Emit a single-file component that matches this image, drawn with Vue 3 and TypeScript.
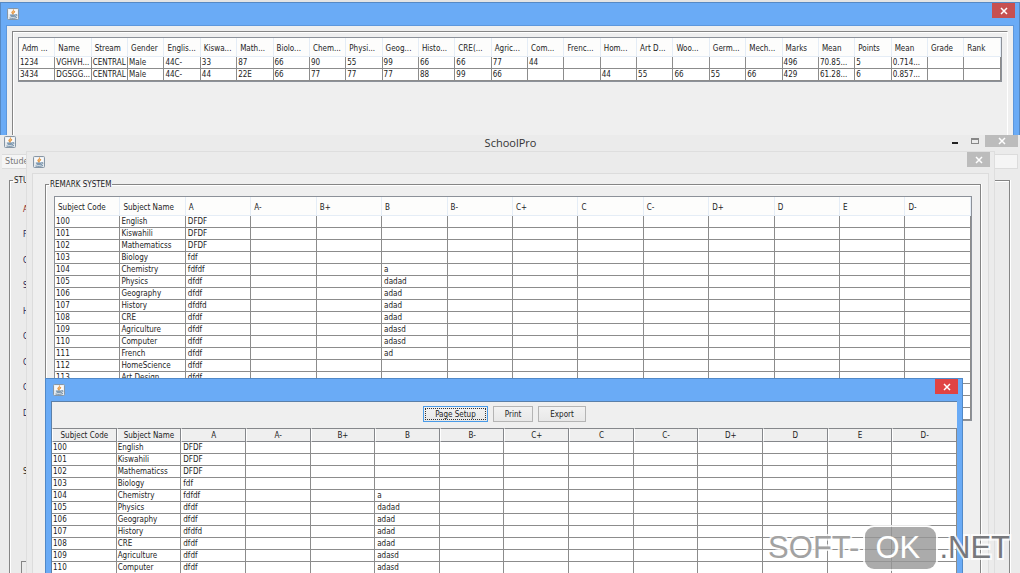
<script setup lang="ts">
import { defineComponent, h } from 'vue'

const JavaIcon = defineComponent({
  render() {
    return h('svg', { viewBox: '0 0 24 24', width: 12, height: 12, 'aria-hidden': 'true' }, [
      h('rect', { x: 1, y: 1, width: 22, height: 22, rx: 2, fill: '#e4e9ed', stroke: '#8796a5', 'stroke-width': 2 }),
      h('path', { d: 'M3 3h18v9H3z', fill: '#f8f9fa' }),
      h('path', { d: 'M13 3c1 3-5 4-3 7l2 3c0-3 5-4 3-7', fill: '#f0b36b', stroke: '#e5953f', 'stroke-width': 2 }),
      h('path', { d: 'M6 13h11v1c0 3-2 4-3 4H9c-2 0-3-2-3-5z', fill: '#7f9ab2' }),
      h('path', { d: 'M17 13c4-1 4 3-1 4M5 20c5 1 10 1 15-1', fill: 'none', stroke: '#6c8aa5', 'stroke-width': 2 }),
    ])
  },
})

const marksColumns: string[] = [
  'Adm ...', 'Name', 'Stream', 'Gender', 'Englis...', 'Kiswa...', 'Math...', 'Biolo...', 'Chem...',
  'Physi...', 'Geog...', 'Histo...', 'CRE(...', 'Agric...', 'Com...', 'Frenc...', 'Hom...', 'Art D...',
  'Woo...', 'Germ...', 'Mech...', 'Marks', 'Mean', 'Points', 'Mean', 'Grade', 'Rank',
]
const marksRows: string[][] = [
  ['1234', 'VGHVH...', 'CENTRAL', 'Male', '44C-', '33', '87', '66', '90', '55', '99', '66', '66', '77', '44',
    '', '', '', '', '', '', '496', '70.85...', '5', '0.714...', '', ''],
  ['3434', 'DGSGG...', 'CENTRAL', 'Male', '44C-', '44', '22E', '66', '77', '77', '77', '88', '99', '66', '',
    '', '44', '55', '66', '55', '66', '429', '61.28...', '6', '0.857...', '', ''],
]

const gradeColumns: string[] = [
  'Subject Code', 'Subject Name', 'A', 'A-', 'B+', 'B', 'B-', 'C+', 'C', 'C-', 'D+', 'D', 'E', 'D-',
]

interface Remark { code: string; name: string; a: string; b: string }
const remarks: Remark[] = [
  { code: '100', name: 'English', a: 'DFDF', b: '' },
  { code: '101', name: 'Kiswahili', a: 'DFDF', b: '' },
  { code: '102', name: 'Mathematicss', a: 'DFDF', b: '' },
  { code: '103', name: 'Biology', a: 'fdf', b: '' },
  { code: '104', name: 'Chemistry', a: 'fdfdf', b: 'a' },
  { code: '105', name: 'Physics', a: 'dfdf', b: 'dadad' },
  { code: '106', name: 'Geography', a: 'dfdf', b: 'adad' },
  { code: '107', name: 'History', a: 'dfdfd', b: 'adad' },
  { code: '108', name: 'CRE', a: 'dfdf', b: 'adad' },
  { code: '109', name: 'Agriculture', a: 'dfdf', b: 'adasd' },
  { code: '110', name: 'Computer', a: 'dfdf', b: 'adasd' },
  { code: '111', name: 'French', a: 'dfdf', b: 'ad' },
  { code: '112', name: 'HomeScience', a: 'dfdf', b: '' },
  { code: '113', name: 'Art Design', a: 'dfdf', b: '' },
]
const cells = (r: Remark): string[] => [r.code, r.name, r.a, '', '', r.b, '', '', '', '', '', '', '', '']
const blank: string[] = gradeColumns.map(() => '')
const remarkRows: string[][] = [...remarks.map(cells), blank, blank, blank]
const previewRows: string[][] = remarks.slice(0, 11).map(cells)

const formLabels: string[] = ['A', 'F', 'C', 'S', 'H', 'C', 'C', 'C', 'D']
</script>

<template>
  <main class="desktop">
    <section class="win marks" aria-label="Marks">
      <header class="bar blue">
        <JavaIcon />
        <button class="close red" aria-label="Close"><svg viewBox="0 0 8 8" width="8" height="8"><path d="M1 1l6 6M7 1l-6 6" /></svg></button>
      </header>
      <div class="marks-client">
        <div class="etched">
          <table class="grid soft">
            <thead><tr><th v-for="(c, i) in marksColumns" :key="i">{{ c }}</th></tr></thead>
            <tbody>
              <tr v-for="r in marksRows" :key="r[0]"><td v-for="(v, i) in r" :key="i">{{ v }}</td></tr>
            </tbody>
          </table>
        </div>
      </div>
    </section>

    <section class="win school" aria-label="SchoolPro">
      <header class="bar school-bar">
        <JavaIcon />
        <h1>SchoolPro</h1>
        <div class="controls">
          <button class="min" aria-label="Minimize"><i></i></button>
          <button class="max" aria-label="Maximize"><i></i></button>
          <button class="close gray wide" aria-label="Close"><svg viewBox="0 0 8 8" width="8" height="8"><path d="M1 1l6 6M7 1l-6 6" /></svg></button>
        </div>
      </header>
      <nav class="menu"><button>Stude</button></nav>
      <fieldset class="form">
        <legend>STU</legend>
        <ul>
          <li v-for="(l, i) in formLabels" :key="i">{{ l }}</li>
        </ul>
        <p>S</p>
        <div class="subpanel"></div>
      </fieldset>
    </section>

    <section class="win remark" aria-label="Remark system">
      <header class="bar remark-bar">
        <JavaIcon />
        <button class="close gray" aria-label="Close"><svg viewBox="0 0 8 8" width="8" height="8"><path d="M1 1l6 6M7 1l-6 6" /></svg></button>
      </header>
      <div class="remark-client">
        <fieldset class="remark-set">
          <legend>REMARK SYSTEM</legend>
          <div class="remark-body">
            <table class="grid soft">
              <thead><tr><th v-for="c in gradeColumns" :key="c">{{ c }}</th></tr></thead>
              <tbody>
                <tr v-for="(r, n) in remarkRows" :key="n"><td v-for="(v, i) in r" :key="i">{{ v }}</td></tr>
              </tbody>
            </table>
          </div>
        </fieldset>
      </div>
    </section>

    <section class="win preview" aria-label="Print preview">
      <header class="bar blue">
        <JavaIcon />
        <button class="close red bright" aria-label="Close"><svg viewBox="0 0 8 8" width="8" height="8"><path d="M1 1l6 6M7 1l-6 6" /></svg></button>
      </header>
      <div class="preview-client">
        <div class="tools">
          <button class="tool focused">Page Setup</button>
          <button class="tool">Print</button>
          <button class="tool">Export</button>
        </div>
        <table class="grid raised">
          <thead><tr><th v-for="c in gradeColumns" :key="c">{{ c }}</th></tr></thead>
          <tbody>
            <tr v-for="r in previewRows" :key="r[0]"><td v-for="(v, i) in r" :key="i">{{ v }}</td></tr>
          </tbody>
        </table>
      </div>
    </section>

    <aside class="mark"><span class="soft-word">SOFT-</span><span class="ok">OK</span><span class="net">.NET</span></aside>
  </main>
</template>

<style>
html,
body {
  height: 100%;
  overflow: hidden;
}
</style>

<style scoped>
.desktop {
  position: relative;
  height: 100vh;
  overflow: hidden;
  background: #e4e4e4;
  color: #1c1c1c;
  font: 8px/11px "DejaVu Sans Condensed", "Noto Sans", sans-serif;
}
.desktop * {
  box-sizing: border-box;
}
button {
  margin: 0;
  padding: 0;
  border: 0;
  background: none;
  color: inherit;
  font: inherit;
}
.win {
  position: absolute;
  display: flex;
  flex-direction: column;
}
.bar {
  display: flex;
  flex: none;
  align-items: flex-start;
  justify-content: space-between;
}
.close {
  display: flex;
  align-items: center;
  justify-content: center;
  width: 23px;
  height: 15px;
}
.close path {
  stroke: #fff;
  stroke-width: 1.5;
}
.red {
  background: #c75050;
}
.red.bright {
  background: #e04343;
}
.gray {
  background: #bcbcbc;
}
.wide {
  width: 33px;
  height: 12px;
}

.marks {
  top: 2px;
  left: 0;
  right: 0;
  height: 150px;
  padding: 0 5px;
  border: 1px solid #5689c4;
  background: #6aabf6;
}
.blue {
  height: 22px;
}
.marks .bar {
  padding: 0 0 0 1px;
  margin-right: -1px;
}
.blue > svg {
  margin-top: 5px;
}
.marks-client {
  flex: 1;
  padding: 5px;
  border: 1px solid #5d97dc;
  border-width: 1px 1px 0;
  background: #efefef;
}
.etched {
  height: 100%;
  padding: 5px;
  border: 1px solid #858585;
  border-right-color: #fff;
  box-shadow: inset 1px 1px #fff;
}

.grid {
  width: 100%;
  table-layout: fixed;
  border-collapse: separate;
  border-spacing: 0;
  background: #fff;
}
.grid th,
.grid td {
  overflow: hidden;
  padding: 0 0 0 1px;
  text-align: left;
  white-space: nowrap;
  font-weight: normal;
}
.grid td {
  height: 12px;
  border-right: 1px solid #8c8c8c;
  border-bottom: 1px solid #8c8c8c;
}
.soft {
  border: 1px solid #8c9199;
}
.soft th {
  height: 19px;
  padding-top: 2px;
  padding-left: 3px;
  border-right: 1px solid #e5edf6;
  border-bottom: 1px solid #e5edf6;
  background: #fdfdfc;
}
.remark td:nth-child(n + 3),
.raised td:nth-child(n + 3) {
  padding-left: 2px;
}

.school {
  top: 135px;
  right: 0;
  bottom: 0;
  left: 0;
  padding: 0 2px;
  background: #ebebeb;
}
.school-bar {
  height: 19px;
  padding-left: 2px;
}
.school-bar > svg {
  margin-top: 1px;
}
h1 {
  flex: 1;
  margin: 0;
  padding-left: 60px;
  color: #333;
  font: 11px/16px "Open Sans", "Noto Sans", sans-serif;
  text-align: center;
}
.controls {
  display: flex;
  align-items: flex-start;
}
.min,
.max {
  width: 20px;
  height: 12px;
}
.min i {
  display: block;
  width: 6px;
  height: 2px;
  margin-top: 4px;
  margin-left: 7px;
  background: #222;
}
.max i {
  display: block;
  width: 8px;
  height: 6px;
  margin-left: 6px;
  border: 1px solid #888;
  border-top-width: 2px;
}
.menu {
  flex: none;
  height: 15px;
  padding-left: 3px;
  border: 1px solid #dcdcdc;
  border-left: 0;
  background: #f5f5f5;
  color: #777;
}
.menu button {
  line-height: 13px;
  font-size: 9px;
}
fieldset {
  min-width: 0;
  margin: 0;
  padding: 0;
  border: 1px solid #858585;
  border-bottom: 0;
  box-shadow: inset 1px 1px #fff, 1px 0 #fff;
}
legend {
  margin-left: 3px;
  padding: 0 1px;
  line-height: 11px;
}
.form {
  flex: 1;
  margin: 6px 8px 0 7px;
}
.form ul {
  display: grid;
  grid-auto-rows: 1fr;
  height: 229px;
  margin: 18px 0 0;
  padding: 0 0 0 13px;
  list-style: none;
}
.form li {
  color: #222255;
}
.form li:first-child {
  color: #882222;
}
.form p {
  margin: 33px 0 0 13px;
}
.subpanel {
  height: 40px;
  margin: 84px 20px 0 11px;
  border: 1px solid #858585;
}

.remark {
  top: 151px;
  right: 25px;
  bottom: 0;
  left: 26px;
  padding: 0 5px;
  border: 1px solid #dedede;
  border-bottom: 0;
  background: #ebebeb;
}
.remark-bar {
  height: 21px;
  padding-left: 1px;
  margin-right: -1px;
}
.remark-bar > svg {
  margin-top: 4px;
}
.remark-client {
  flex: 1;
  min-height: 0;
  padding: 5px 7px 0 12px;
  border: 1px solid #dcdcdc;
  border-bottom: 0;
  background: #efefef;
}
.remark-set {
  height: 100%;
}
.remark-body {
  padding: 6px 8px 0;
}

.preview {
  top: 378px;
  right: 57px;
  bottom: 0;
  left: 45px;
  padding: 0 5px;
  border: 1px solid #5189c8;
  border-bottom: 0;
  background: #6aabf6;
}
.preview .bar {
  padding-left: 2px;
  margin-right: -1px;
}
.preview-client {
  flex: 1;
  min-height: 0;
  overflow: hidden;
  border: 1px solid #5b7fa8;
  border-width: 1px 0 0 1px;
  background: #efefef;
}
.tools {
  display: flex;
  justify-content: center;
  gap: 5px;
  height: 26px;
  padding-top: 4px;
}
.tool {
  height: 16px;
  padding: 0 11px;
  border: 1px solid #b4b4b4;
  background: linear-gradient(#f2f2f2, #e8e8e8);
}
.tool.focused {
  border-color: #4a9be8;
  outline: 1px dotted #333;
  outline-offset: -3px;
}
.raised th {
  height: 14px;
  padding: 0;
  border: 1px solid #85878b;
  border-left-color: #fff;
  background: #efefef;
  text-align: center;
}

.mark {
  position: absolute;
  right: 10px;
  bottom: 4px;
  display: flex;
  align-items: center;
  height: 42px;
  color: #a2a2a2;
  font: 31px/42px "Liberation Sans", Arial, sans-serif;
}
.soft-word,
.net {
  -webkit-text-stroke: 4px rgba(255, 255, 255, 0.8);
  paint-order: stroke fill;
}
.net {
  color: #77787c;
}
.ok {
  width: 71px;
  padding-right: 6px;
  margin: 0 3px 0 6px;
  border-radius: 9px;
  background: rgba(150, 150, 150, 0.8);
  box-shadow: 0 0 0 2px rgba(255, 255, 255, 0.8);
  color: #fff;
  text-align: center;
}
</style>
